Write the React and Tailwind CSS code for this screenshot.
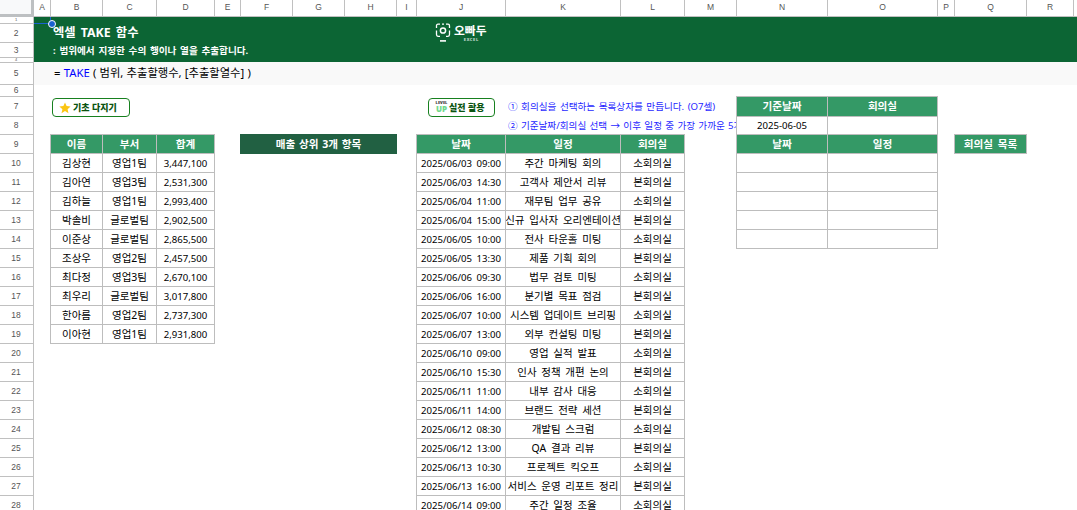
import clsx from "clsx";

const COLS = "ABCDEFGHIJKLMNOPQR".split("");
const ROWS = Array.from({ length: 28 }, (_, i) => i + 1);

const people = [
  ["김상현", "영업1팀", "3,447,100"],
  ["김아연", "영업3팀", "2,531,300"],
  ["김하늘", "영업1팀", "2,993,400"],
  ["박솔비", "글로벌팀", "2,902,500"],
  ["이준상", "글로벌팀", "2,865,500"],
  ["조상우", "영업2팀", "2,457,500"],
  ["최다정", "영업3팀", "2,670,100"],
  ["최우리", "글로벌팀", "3,017,800"],
  ["한아름", "영업2팀", "2,737,300"],
  ["이아현", "영업1팀", "2,931,800"],
];

const meetings = [
  ["2025/06/03 09:00", "주간 마케팅 회의", "소회의실"],
  ["2025/06/03 14:30", "고객사 제안서 리뷰", "본회의실"],
  ["2025/06/04 11:00", "재무팀 업무 공유", "소회의실"],
  ["2025/06/04 15:00", "신규 입사자 오리엔테이션", "본회의실"],
  ["2025/06/05 10:00", "전사 타운홀 미팅", "소회의실"],
  ["2025/06/05 13:30", "제품 기획 회의", "본회의실"],
  ["2025/06/06 09:30", "법무 검토 미팅", "소회의실"],
  ["2025/06/06 16:00", "분기별 목표 점검", "본회의실"],
  ["2025/06/07 10:00", "시스템 업데이트 브리핑", "소회의실"],
  ["2025/06/07 13:00", "외부 컨설팅 미팅", "본회의실"],
  ["2025/06/10 09:00", "영업 실적 발표", "소회의실"],
  ["2025/06/10 15:30", "인사 정책 개편 논의", "본회의실"],
  ["2025/06/11 11:00", "내부 감사 대응", "소회의실"],
  ["2025/06/11 14:00", "브랜드 전략 세션", "본회의실"],
  ["2025/06/12 08:30", "개발팀 스크럼", "소회의실"],
  ["2025/06/12 13:00", "QA 결과 리뷰", "본회의실"],
  ["2025/06/13 10:30", "프로젝트 킥오프", "소회의실"],
  ["2025/06/13 16:00", "서비스 운영 리포트 정리", "본회의실"],
  ["2025/06/14 09:00", "주간 일정 조율", "소회의실"],
];

// "B9" or "F9:H9" -> grid placement, the first track holds the headings
function place(ref) {
  const [from, to = from] = ref.split(":");
  return {
    gridColumn: `${COLS.indexOf(from[0]) + 2} / ${COLS.indexOf(to[0]) + 3}`,
    gridRow: `${Number(from.slice(1)) + 1} / ${Number(to.slice(1)) + 2}`,
  };
}

function Area({ at, className, children }) {
  return (
    <div style={place(at)} className={clsx("flex min-w-0 items-center whitespace-nowrap", className)}>
      {children}
    </div>
  );
}

function Cell({ at, className, children }) {
  return (
    <Area
      at={at}
      className={clsx("-ml-px -mt-px justify-center overflow-hidden border border-[#bdbdbd] bg-white pt-px", className)}
    >
      {children}
    </Area>
  );
}

function Head({ at, children }) {
  return (
    <Area
      at={at}
      className="-ml-px -mt-px justify-center border border-[#bdbdbd] bg-[#349966] text-[10.6px] font-bold text-white"
    >
      {children}
    </Area>
  );
}

function Logo() {
  return (
    <div className="flex gap-[3px] pl-[18px] pt-[6px] text-white">
      <svg width="16" height="20" viewBox="0 0 16 20" fill="none" stroke="currentColor" strokeWidth="1.3">
        <path d="M1.5 5V2.8Q1.5 1.2 3 1.2H5M7 1.2H9M11 1.2H13Q14.5 1.2 14.5 2.8V5M1.5 7.5V11.5Q1.5 13.3 3 13.3H5M14.5 7.5V11.5Q14.5 13.3 13 13.3H11" />
        <circle cx="8" cy="7.5" r="2.6" strokeWidth="1.5" />
        <path d="M5 17.9H11" strokeWidth="1.6" />
      </svg>
      <div className="flex flex-col items-center">
        <span className="text-[11.8px] font-bold leading-[15px]">오빠두</span>
        <span className="pl-[2px] text-[4px] font-bold leading-[4px] tracking-[0.6px] opacity-80">EXCEL</span>
      </div>
    </div>
  );
}

function Badge({ className, children }) {
  return (
    <div
      className={clsx(
        "flex h-[19px] shrink-0 items-center rounded-[4px] border border-[#17801f] bg-white text-[9px] font-black text-[#0b5410] [word-spacing:0px]",
        className
      )}
    >
      {children}
    </div>
  );
}

export default function App() {
  return (
    <div className="h-[510px] w-[1077px] overflow-hidden bg-white font-['Noto_Sans','Noto_Sans_CJK_KR',sans-serif] text-[10.5px] leading-none text-black">
      <div className="grid w-[1077px] grid-cols-[34px_17px_52px_54px_58px_26px_52px_52px_52px_20px_89px_115px_64px_52px_91px_110px_17px_72px_47px_3px] grid-rows-[17px_7px_19px_15px_5px_22px_12px_20px_18px_repeat(20,19px)] [word-spacing:2px]">
        {/* headings */}
        <div className="col-start-1 row-start-1 border-b-[3px] border-r-[3px] border-[#bdc0c2] bg-[#f8f9fa]" />
        {COLS.map((c, i) => (
          <div
            key={c}
            style={{ gridColumn: i + 2, gridRow: 1 }}
            className="flex items-center justify-center border-b border-r border-[#c0c0c0] pb-px font-['Liberation_Sans',sans-serif] text-[8.5px] text-[#555]"
          >
            {c}
          </div>
        ))}
        <div className="col-start-20 row-start-1 border-b border-[#c0c0c0]" />
        {ROWS.map((r) => (
          <div
            key={r}
            style={{ gridColumn: 1, gridRow: r + 1 }}
            className={clsx(
              "flex min-h-0 items-center justify-center border-b border-r border-[#c0c0c0] pr-px font-['Liberation_Sans',sans-serif] text-[#555]",
              r === 1 || r === 4 ? "text-[4px]" : "text-[8.5px]"
            )}
          >
            {r}
          </div>
        ))}

        {/* title band */}
        <div className="col-start-2 col-end-21 row-start-2 row-end-6 mb-px bg-[#0c6534]" />
        <div className="col-start-2 col-end-21 row-start-6 -mt-px bg-[#f9f9f9]" />
        <Area at="A1" className="relative border-b border-r border-[#1a62d0]">
          <span className="absolute -bottom-[5px] -right-[6px] z-10 size-[8px] rounded-full border border-white bg-[#1a62d0]" />
        </Area>
        <Area at="B2:H2" className="pl-[2px] text-[12.3px] font-bold text-white">
          엑셀 TAKE 함수
        </Area>
        <Area at="B3:H3" className="pl-[2px] text-[9.6px] font-bold text-white [word-spacing:1.2px]">
          : 범위에서 지정한 수의 행이나 열을 추출합니다.
        </Area>
        <div style={place("J1:K4")}>
          <Logo />
        </div>
        <Area at="B5:H5" className="pb-[2px] pl-[3px] text-[11.3px] [word-spacing:0.3px]">
          <span className="whitespace-pre">
            = <span className="text-[#0000ff]">TAKE</span> ( 범위, 추출할행수, [추출할열수] )
          </span>
        </Area>

        {/* basics */}
        <Area at="B7:D7" className="pl-px pt-px">
          <Badge className="w-[78px] gap-[2px] pl-[6px]">
            <svg width="12" height="12" viewBox="0 0 12 12" fill="#fbc512">
              <path d="M6 .5 7.6 4.1 11.6 4.5 8.6 7.2 9.5 11.2 6 9.1 2.5 11.2 3.4 7.2.4 4.5 4.4 4.1Z" />
            </svg>
            기초 다지기
          </Badge>
        </Area>
        <Head at="B9">이름</Head>
        <Head at="C9">부서</Head>
        <Head at="D9">합계</Head>
        {people.flatMap(([name, team, total], i) => [
          <Cell key={`B${i}`} at={`B${i + 10}`}>{name}</Cell>,
          <Cell key={`C${i}`} at={`C${i + 10}`}>{team}</Cell>,
          <Cell key={`D${i}`} at={`D${i + 10}`} className="text-[9.6px]">{total}</Cell>,
        ])}
        <Area
          at="F9:H9"
          className="-ml-px -mt-px justify-center bg-[#216042] text-[10.6px] font-bold text-white [word-spacing:1px]"
        >
          매출 상위 3개 항목
        </Area>

        {/* meeting schedule */}
        <Area at="J7" className="pl-[11px]">
          <Badge className="w-[67px] gap-[2px] pl-[7px]">
            <span className="flex w-[11px] flex-col items-center">
              <span className="text-[4px] leading-[4px] text-[#444]">LEVEL</span>
              <span className="text-[8px] leading-[8px] text-[#71d98c]">UP</span>
            </span>
            실전 활용
          </Badge>
        </Area>
        <Area at="K7:M7" className="pl-[2px] text-[9.6px] text-[#1f1fff] [word-spacing:1px]">
          ① 회의실을 선택하는 목록상자를 만듭니다. (O7셀)
        </Area>
        <Area at="K8:M8" className="overflow-hidden pl-[2px] text-[9.6px] text-[#1f1fff] [word-spacing:0.8px]">
          ② 기준날짜/회의실 선택 → 이후 일정 중 가장 가까운 5개
        </Area>
        <Head at="J9">날짜</Head>
        <Head at="K9">일정</Head>
        <Head at="L9">회의실</Head>
        {meetings.flatMap(([date, title, room], i) => [
          <Cell key={`J${i}`} at={`J${i + 10}`} className="text-[9.6px]">{date}</Cell>,
          <Cell key={`K${i}`} at={`K${i + 10}`}>{title}</Cell>,
          <Cell key={`L${i}`} at={`L${i + 10}`}>{room}</Cell>,
        ])}

        {/* lookup */}
        <Head at="N7">기준날짜</Head>
        <Head at="O7">회의실</Head>
        <Cell at="N8" className="text-[9.6px]">2025-06-05</Cell>
        <Cell at="O8" />
        <Head at="N9">날짜</Head>
        <Head at="O9">일정</Head>
        {[10, 11, 12, 13, 14].flatMap((r) => [
          <Cell key={`N${r}`} at={`N${r}`} />,
          <Cell key={`O${r}`} at={`O${r}`} />,
        ])}
        <Head at="Q9">회의실 목록</Head>
      </div>
    </div>
  );
}
